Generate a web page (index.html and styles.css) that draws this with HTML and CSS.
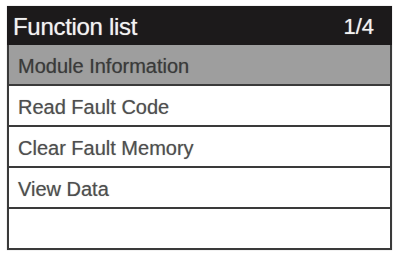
FILE: index.html
```html
<!DOCTYPE html>
<html>
<head>
<meta charset="utf-8">
<link rel="stylesheet" href="styles.css">
</head>
<body>
<div class="panel">
  <div class="header">
    <span class="title">Function list</span>
    <span class="page">1/4</span>
  </div>
  <div class="row selected">Module Information</div>
  <div class="row">Read Fault Code</div>
  <div class="row">Clear Fault Memory</div>
  <div class="row">View Data</div>
  <div class="row"></div>
</div>
</body>
</html>
```
FILE: styles.css
```css
html, body {
  margin: 0;
  padding: 0;
  background: #ffffff;
}
body {
  width: 396px;
  height: 253px;
  overflow: hidden;
  font-family: "Liberation Sans", Arial, sans-serif;
}
.panel {
  margin: 6px 0 0 7px;
  width: 385px;
  box-sizing: border-box;
  border-left: 2px solid #3a3a3a;
  border-right: 2px solid #3a3a3a;
  display: flex;
  flex-direction: column;
  box-shadow: 0 0 1px rgba(0,0,0,0.3);
}
.header {
  height: 39px;
  margin: 0 -2px;
  background: #1c1a1b;
  color: #f2f2f2;
  display: flex;
  align-items: center;
  justify-content: space-between;
  padding: 3px 18px 0 6px;
  box-sizing: border-box;
  text-shadow: 0 0 1px rgba(255,255,255,0.6);
}
.title {
  font-size: 24px;
  letter-spacing: -0.3px;
}
.page {
  font-size: 22px;
}
.row {
  height: 41px;
  box-sizing: border-box;
  border-bottom: 2px solid #3a3a3a;
  padding: 10px 0 0 9px;
  font-size: 20px;
  line-height: 23px;
  color: #4e4e4e;
  background: #ffffff;
  text-shadow: 0 0 1px rgba(0,0,0,0.35);
}
.row.selected {
  background: #9e9e9e;
  color: #3a3a3a;
}
```
